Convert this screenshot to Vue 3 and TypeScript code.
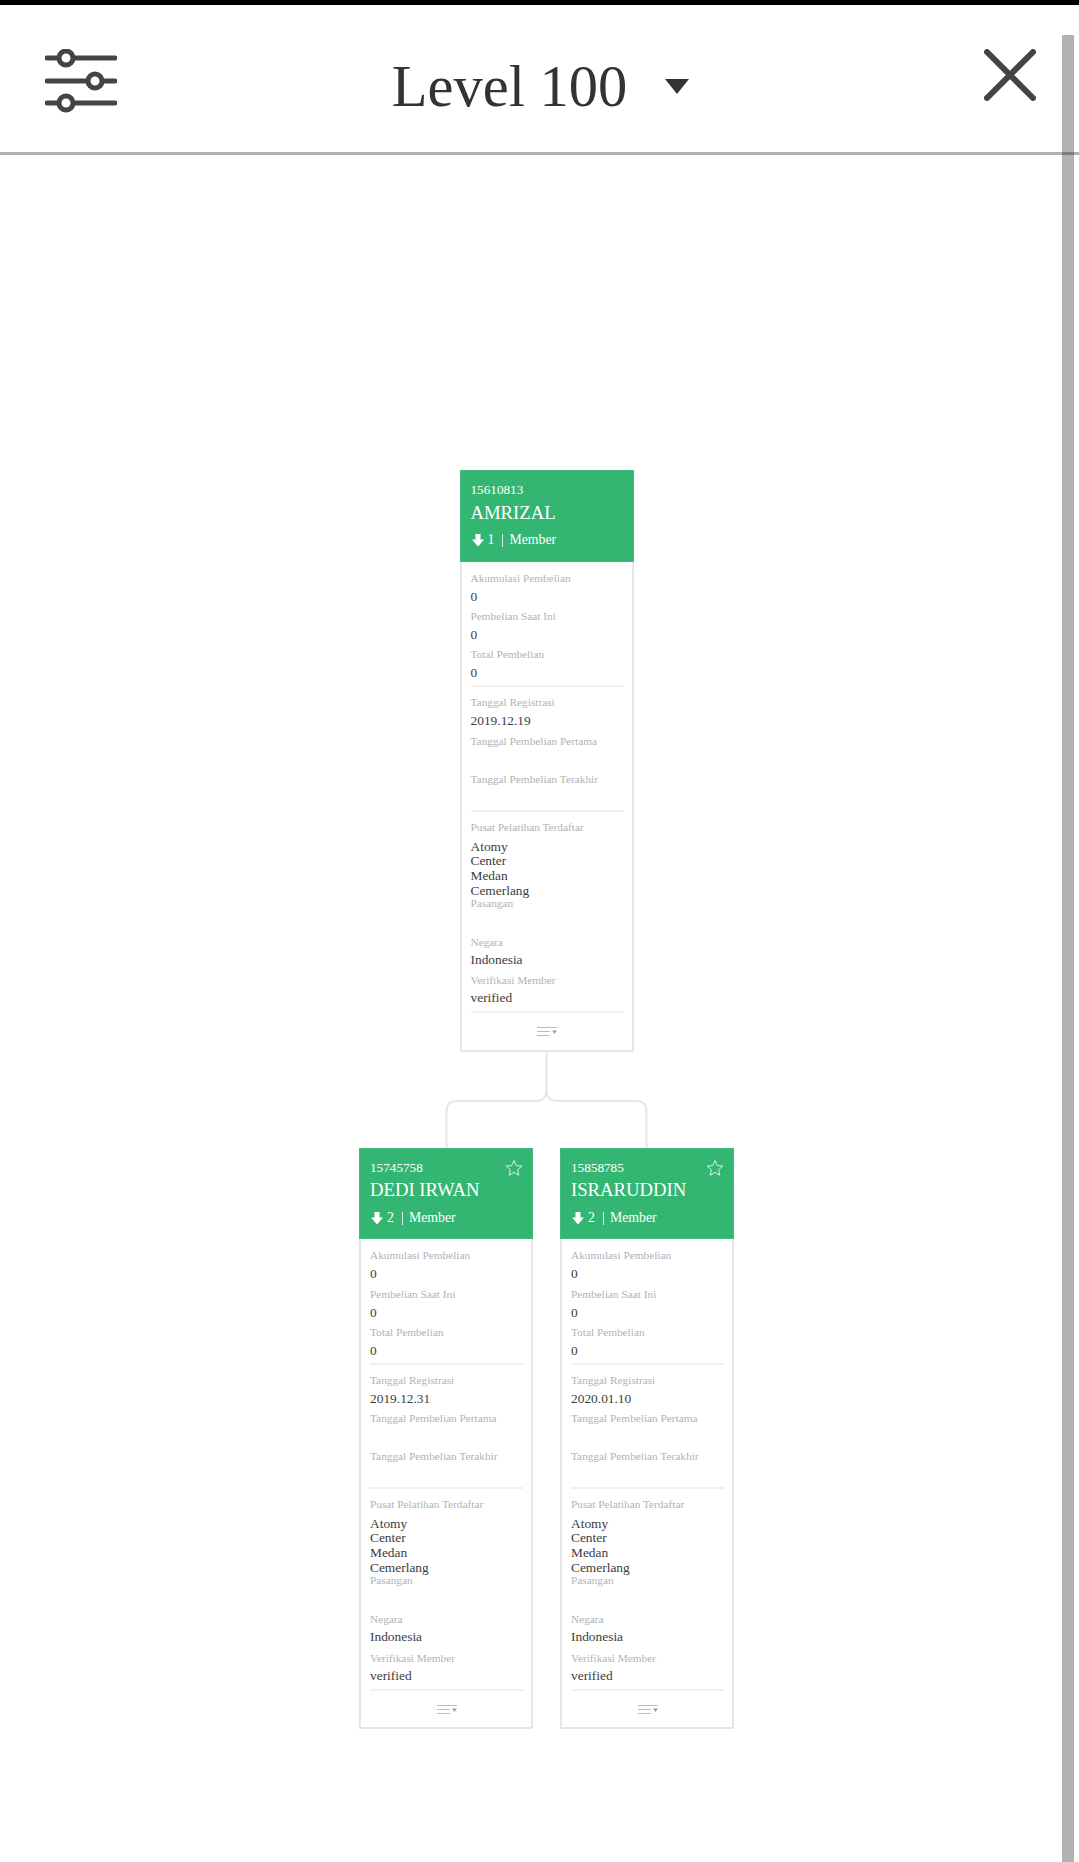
<script setup lang="ts">
interface Member {
  id: string
  name: string
  depth: number
  registered: string
  star: boolean
}

const root: Member = { id: "15610813", name: "AMRIZAL", depth: 1, registered: "2019.12.19", star: false }

const children: Member[] = [
  { id: "15745758", name: "DEDI IRWAN", depth: 2, registered: "2019.12.31", star: true },
  { id: "15858785", name: "ISRARUDDIN", depth: 2, registered: "2020.01.10", star: true }
]

const purchases = ["Akumulasi Pembelian", "Pembelian Saat Ini", "Total Pembelian"]
</script>

<template>
  <div class="page">
    <div class="topbar"></div>
    <header class="head">
      <svg class="sliders" width="72" height="66" viewBox="0 0 72 66">
        <g fill="#fff" stroke="#444" stroke-width="5" stroke-linecap="round">
          <path d="M2 9H70M2 32H70M2 54H70" fill="none" />
          <circle cx="21" cy="9" r="7" />
          <circle cx="50" cy="32" r="7" />
          <circle cx="21" cy="54" r="7" />
        </g>
      </svg>
      <div class="title">
        <span>Level 100</span>
        <i class="caret"></i>
      </div>
      <svg class="close" width="52" height="52" viewBox="0 0 52 52">
        <path d="M3 3L49 49M49 3L3 49" stroke="#444" stroke-width="6" stroke-linecap="round" fill="none" />
      </svg>
    </header>
    <div class="scrollbar"></div>

    <main class="tree">
      <template v-for="(group, g) in [[root], children]" :key="g">
        <svg v-if="g === 1" class="links" width="205" height="96" viewBox="0 0 205 96">
          <path
            d="M102.5 0V38Q102.5 49 91.5 49H13Q2.5 49 2.5 59.500V96M102.500 38Q102.500 49 113.500 49H192Q202.500 49 202.500 59.500V96"
            fill="none"
            stroke="#e6e6e6"
            stroke-width="2"
          />
        </svg>
        <div class="row" :class="{ child: g === 1 }">
          <article v-for="m in group" :key="m.id" class="card">
            <div class="card-head">
              <div class="id">{{ m.id }}</div>
              <div class="name">{{ m.name }}</div>
              <div class="sub">
                <svg width="14" height="14" viewBox="0 0 14 14">
                  <path d="M4.500 1H9.500V6.500H13L7 13.500L1 6.500H4.500Z" fill="#fff" />
                </svg>
                <span class="depth">{{ m.depth }}</span>
                <span class="sep"></span>
                <span>Member</span>
              </div>
              <svg v-if="m.star" class="star" width="18" height="18" viewBox="0 0 18 18">
                <path
                  d="M9 1.500L11.200 6.600L16.800 7.100L12.600 10.800L13.800 16.300L9 13.400L4.200 16.300L5.400 10.800L1.200 7.100L6.800 6.600Z"
                  fill="none"
                  stroke="#d8f2e4"
                  stroke-width="1"
                />
              </svg>
            </div>
            <div class="card-body">
              <section class="block">
                <template v-for="label in purchases" :key="label">
                  <div class="label">{{ label }}</div>
                  <div class="value">0</div>
                </template>
              </section>
              <section class="block">
                <div class="label">Tanggal Registrasi</div>
                <div class="value roomy">{{ m.registered }}</div>
                <div class="label">Tanggal Pembelian Pertama</div>
                <div class="value"></div>
                <div class="label">Tanggal Pembelian Terakhir</div>
                <div class="value"></div>
              </section>
              <section class="block last">
                <div class="label">Pusat Pelatihan Terdaftar</div>
                <div class="value center">Atomy Center Medan Cemerlang</div>
                <div class="label">Pasangan</div>
                <div class="value roomy"></div>
                <div class="label">Negara</div>
                <div class="value roomy">Indonesia</div>
                <div class="label">Verifikasi Member</div>
                <div class="value">verified</div>
              </section>
              <div class="more">
                <svg width="20" height="10" viewBox="0 0 20 10">
                  <path d="M0 .5H20M0 4.500H13M0 8.500H13" stroke="#b9bcc1" stroke-width="1" fill="none" />
                  <path d="M15 3.500H20L17.500 7Z" fill="#9a9da3" />
                </svg>
              </div>
            </div>
          </article>
        </div>
      </template>
    </main>
  </div>
</template>

<style scoped>
.page {
  position: relative;
  height: 1862px;
  overflow: hidden;
  background: #fff;
  font-family: "Liberation Serif", serif;
  color: #333;
}

.topbar {
  height: 5px;
  background: #000;
}

.head {
  display: grid;
  grid-template-columns: 1fr auto 1fr;
  align-items: center;
  height: 147px;
  padding: 0 43px 0 45px;
  border-bottom: 3px solid rgba(0, 0, 0, 0.3);
}

.sliders {
  margin-top: 6px;
}

.title {
  display: flex;
  align-items: center;
  gap: 38px;
  margin-top: 16px;
  font-size: 58.500px;
  line-height: 70px;
  color: #333;
}

.caret {
  width: 0;
  height: 0;
  border-left: 12px solid transparent;
  border-right: 12px solid transparent;
  border-top: 15px solid #333;
}

.close {
  justify-self: end;
  margin-top: -8px;
}

.scrollbar {
  position: absolute;
  top: 35px;
  right: 5px;
  bottom: 0;
  width: 12px;
  background: rgba(0, 0, 0, 0.3);
}

.tree {
  display: flex;
  flex-direction: column;
  align-items: center;
  padding: 315px 0 0 14px;
}

.links {
  display: block;
}

.row {
  display: flex;
  gap: 27px;
}

.card {
  width: 174px;
  height: 582px;
  box-sizing: border-box;
  display: flex;
  flex-direction: column;
}

.child .card {
  height: 581px;
}

.card-head {
  position: relative;
  height: 92px;
  box-sizing: border-box;
  padding: 11px 10px 0;
  border: 1px solid #45bb7f;
  background: #34b673;
  color: #fff;
}

.child .card-head {
  height: 91px;
}

.id {
  font-size: 13.2px;
  line-height: 16px;
}

.name {
  margin-top: 3px;
  font-size: 18.7px;
  line-height: 24px;
  white-space: nowrap;
}

.child .name {
  margin-top: 2px;
}

.sub {
  display: flex;
  align-items: center;
  margin-top: 6px;
  font-size: 13.8px;
  line-height: 18px;
}

.child .sub {
  margin-top: 7px;
}

.depth {
  margin-left: 3px;
}

.sep {
  width: 1px;
  height: 13px;
  margin: 0 6px 0 8px;
  background: #d8f2e4;
}

.star {
  position: absolute;
  top: 10px;
  right: 9px;
}

.card-body {
  flex: 1;
  padding: 8px 8px 0 9px;
  border: 2px solid #e6e6e6;
  border-top: 0;
}

.block {
  padding-bottom: 1px;
  margin-bottom: 7px;
  border-bottom: 2px solid #f0f0f0;
}

.label {
  font-size: 11.3px;
  line-height: 16.500px;
  color: #b0b3b9;
  white-space: nowrap;
}

.value {
  min-height: 20px;
  margin-bottom: 1.500px;
  font-size: 13.4px;
  line-height: 20px;
  color: #3c3c3c;
}

.value.roomy {
  margin-bottom: 2.500px;
}

.child .block:not(.last) .value.roomy {
  margin-bottom: 1.500px;
}

.child .block:first-child .value:nth-child(2) {
  margin-bottom: 2.500px;
}

.value.center {
  width: min-content;
  margin: 4px 0 -3.400px;
  line-height: 14.700px;
}

.block.last .value:nth-child(6) {
  margin-bottom: 1.500px;
}

.child .block.last .value:nth-child(6) {
  margin-bottom: 2.500px;
}

.more {
  display: flex;
  justify-content: center;
  padding-top: 7px;
}

.more svg {
  display: block;
}
</style>

<style>
body {
  background: #fff;
}
</style>
